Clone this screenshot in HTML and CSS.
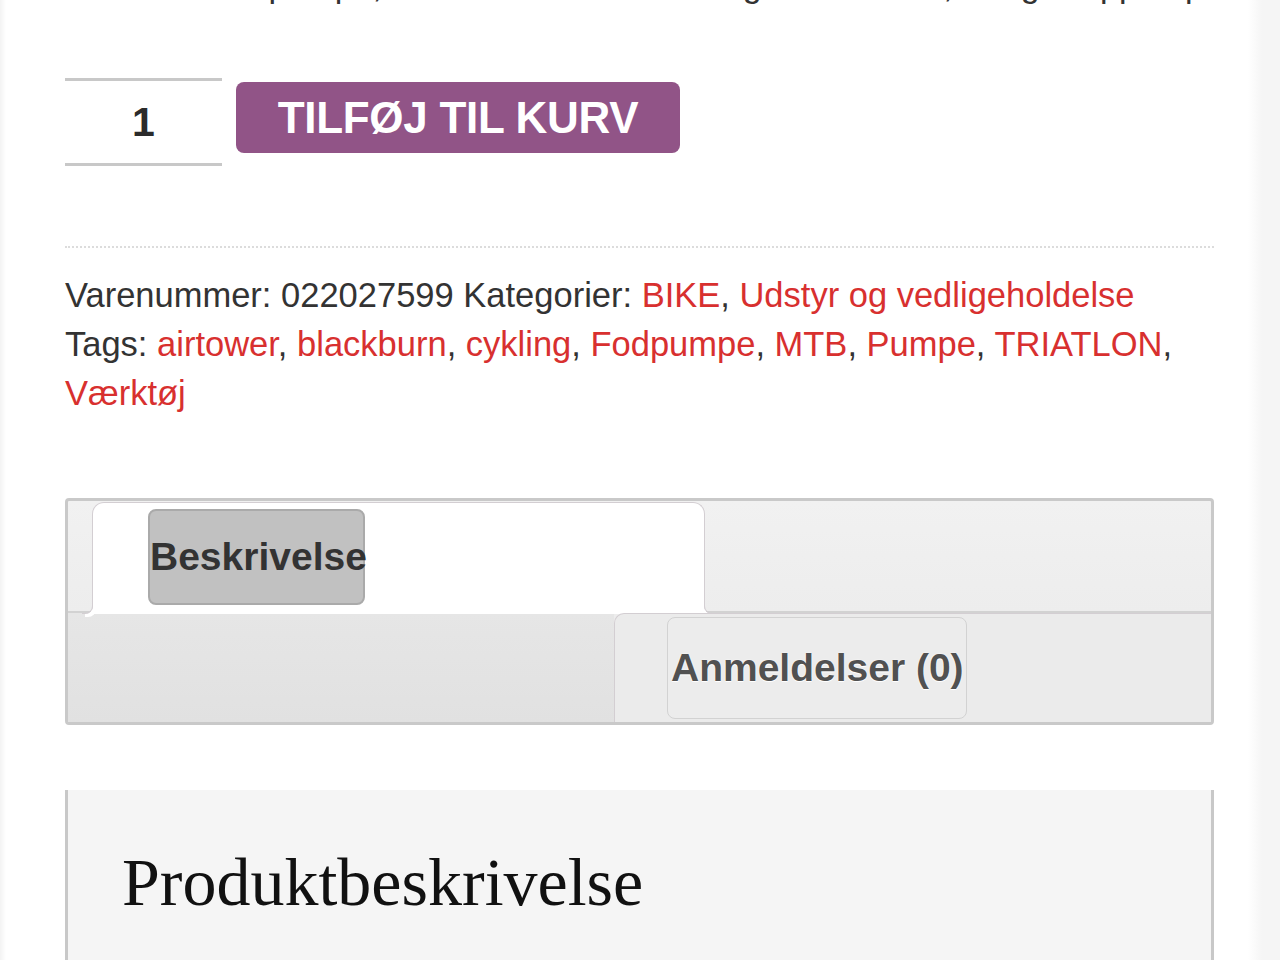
FILE: index.html
```html
<!DOCTYPE html>
<html lang="da">
<head>
    <meta charset="UTF-8">
    <meta name="viewport" content="width=device-width, initial-scale=1.0">
    <title>Blackburn AirTower - Fodpumpe</title>
    <link rel="stylesheet" href="styles.css">
</head>
<body>
    <div class="product">
        <p class="intro">Effektiv standpumpe, med stort manometer og ventilhoved, der gør oppumpning hurtig og nøjagtig</p>

        <form class="cart">
            <div class="quantity">1</div>
            <button type="button" class="add-to-cart">TILFØJ TIL KURV</button>
        </form>

        <div class="product-meta">
            <span>Varenummer: 022027599</span>
            <span>Kategorier: <a href="#">BIKE</a>, <a href="#">Udstyr og vedligeholdelse</a></span>
            <br>
            Tags: <a href="#">airtower</a>, <a href="#">blackburn</a>, <a href="#">cykling</a>, <a href="#">Fodpumpe</a>, <a href="#">MTB</a>, <a href="#">Pumpe</a>, <a href="#">TRIATLON</a>,
            <a href="#">Værktøj</a>
        </div>

        <div class="tabs">
            <div class="tab-row">
                <div class="tab active">
                    <a href="#">Beskrivelse</a>
                </div>
            </div>
            <div class="tab-row second">
                <div class="tab-spacer"></div>
                <div class="tab">
                    <a href="#">Anmeldelser (0)</a>
                </div>
            </div>
        </div>

        <div class="panel">
            <h2>Produktbeskrivelse</h2>
        </div>
    </div>
</body>
</html>
```

FILE: styles.css
```css
* {
    margin: 0;
    padding: 0;
    box-sizing: border-box;
}

body {
    font-family: "Liberation Sans", Arial, sans-serif;
    color: #333;
    background: linear-gradient(to right, #f3f3f3 0, #fff 6px, #fff 1248px, #f5f5f5 1262px);
    min-height: 100vh;
    overflow: hidden;
}

.product {
    width: 1149px;
    margin-left: 65px;
}

.intro {
    font-size: 34px;
    line-height: 49px;
    margin-top: -39px;
    white-space: nowrap;
    overflow: hidden;
}

.cart {
    display: flex;
    align-items: flex-start;
    gap: 14px;
    margin-top: 68px;
}

.quantity {
    width: 157px;
    height: 88px;
    border-top: 3px solid #c8c8c8;
    border-bottom: 3px solid #c8c8c8;
    font-size: 41px;
    font-weight: bold;
    line-height: 82px;
    text-align: center;
    color: #2b2b2b;
}

.add-to-cart {
    margin-top: 4px;
    width: 444px;
    height: 71px;
    border: none;
    border-radius: 8px;
    background-color: #915487;
    color: #fff;
    font-family: "Liberation Sans", Arial, sans-serif;
    font-size: 44px;
    font-weight: bold;
    letter-spacing: -0.3px;
}

.product-meta {
    margin-top: 80px;
    padding-top: 23px;
    border-top: 2px dotted #dcdcdc;
    font-size: 34.5px;
    line-height: 49px;
    color: #333;
}

.product-meta a {
    color: #d8302f;
    text-decoration: none;
}

.tabs {
    margin-top: 80px;
    border: 3px solid #c9c9c9;
    border-radius: 4px;
    background: linear-gradient(#f1f1f1, #e9e9e9);
}

.tab-row {
    display: flex;
    height: 112px;
    padding-left: 24px;
    border-bottom: 2px solid #d2d2d2;
}

.tab-row.second {
    height: 109px;
    padding-left: 0;
    border-bottom: none;
}

.tab {
    position: relative;
}

.tab a {
    display: flex;
    align-items: center;
    font-size: 39px;
    font-weight: bold;
    text-decoration: none;
}

.tab.active {
    width: 613px;
    height: 112px;
    margin-top: 1px;
    padding: 6px 0 0 55px;
    background: #fff;
    border: 1px solid #d3ced2;
    border-bottom: none;
    border-radius: 12px 12px 0 0;
}

.tab.active::before,
.tab.active::after {
    content: "";
    position: absolute;
    bottom: 0;
    width: 10px;
    height: 10px;
    border: 1px solid #d3ced2;
}

.tab.active::before {
    left: -11px;
    border-width: 0 1px 1px 0;
    border-bottom-right-radius: 8px;
    box-shadow: 3px 3px 0 #fff;
}

.tab.active::after {
    right: -11px;
    border-width: 0 0 1px 1px;
    border-bottom-left-radius: 8px;
    box-shadow: -3px 3px 0 #fff;
}

.tab.active a {
    width: 217px;
    height: 96px;
    background: #c1c1c1;
    border: 2px solid #aaa;
    border-radius: 8px;
    color: #333;
}

.tab-spacer {
    width: 546px;
    background: linear-gradient(#e6e6e6, #e1e1e1);
}

.tab-row.second .tab {
    flex: 1;
    padding: 3px 0 0 52px;
    background: #ebebeb;
    border-left: 1px solid #d3ced2;
    border-top: 1px solid #d3ced2;
    border-top-left-radius: 10px;
}

.tab-row.second .tab a {
    width: 300px;
    height: 102px;
    padding-left: 3px;
    background: #ececec;
    border: 1px solid #d2d2d2;
    border-radius: 8px;
    color: #515151;
    text-shadow: 0 0 2px #fff, 0 1px 0 #fff;
}

.panel {
    margin-top: 65px;
    min-height: 200px;
    padding: 51px 0 0 54px;
    background: #f5f5f5;
    border-left: 3px solid #c8c8c8;
    border-right: 3px solid #c8c8c8;
}

.panel h2 {
    font-family: "Liberation Serif", "Times New Roman", serif;
    font-size: 68px;
    font-weight: normal;
    line-height: 82px;
    color: #111;
}
```
